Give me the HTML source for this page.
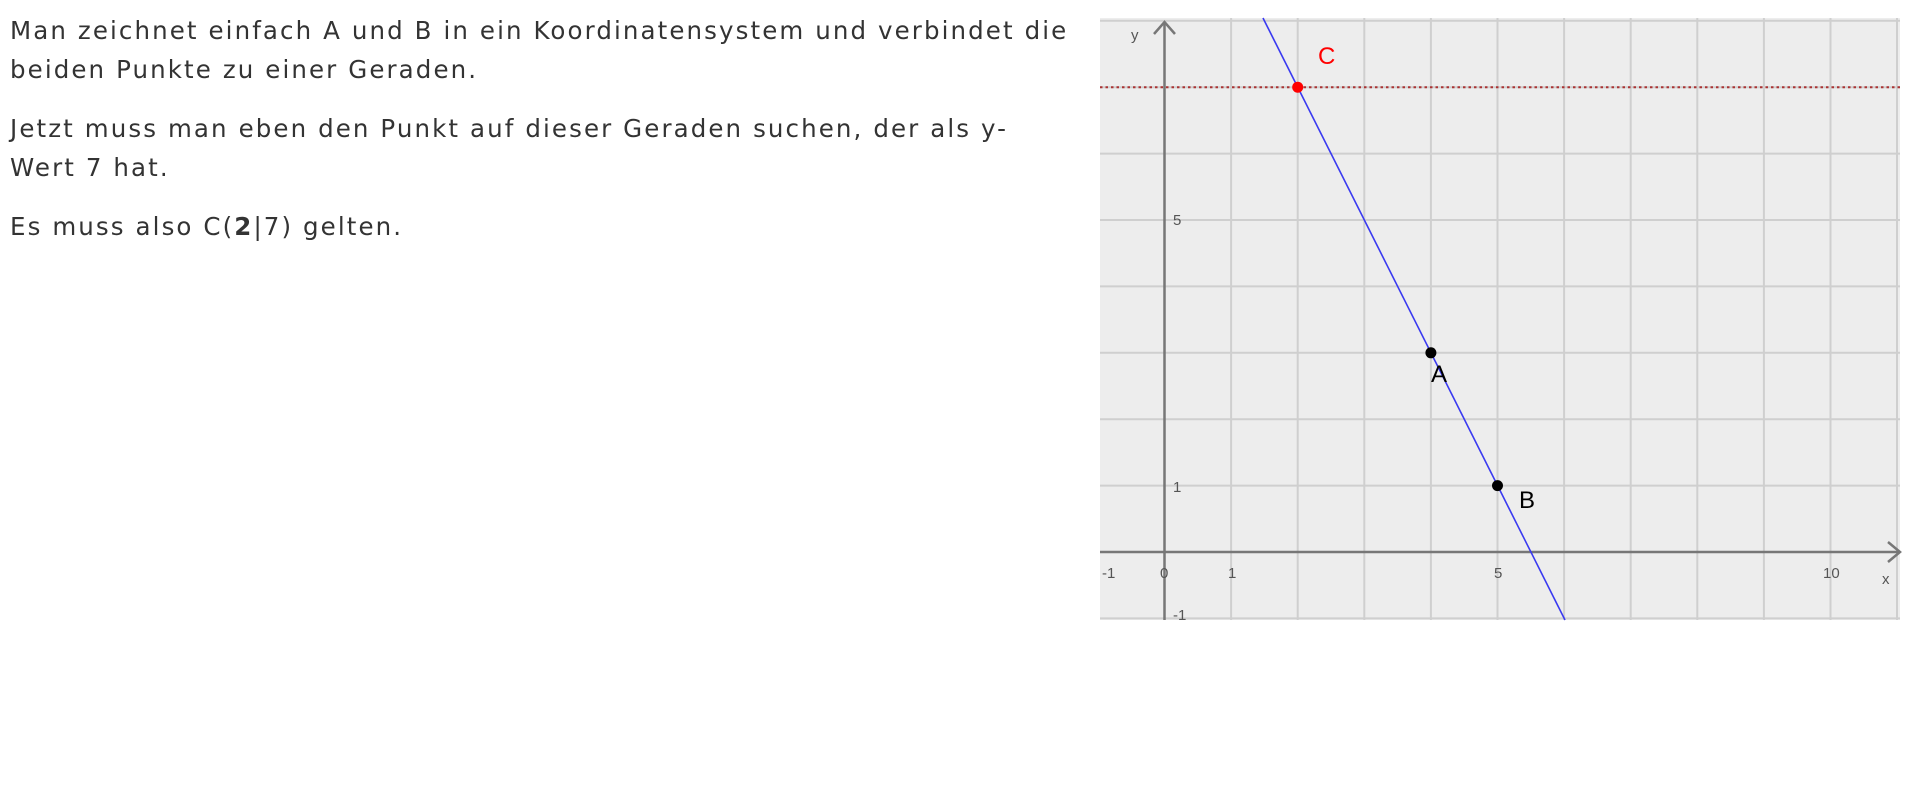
<!DOCTYPE html>
<html><head><meta charset="utf-8"><style>
body{margin:0;background:#fff;width:1920px;height:810px;overflow:hidden;position:relative}
.t{position:absolute;left:10px;top:11px;width:1100px;font-family:"DejaVu Sans","Liberation Sans",sans-serif;font-size:24.5px;letter-spacing:2.1px;color:#333;line-height:39px;white-space:nowrap}
.t p{margin:0 0 20px 0}
svg{position:absolute;left:0;top:0}
</style></head><body>
<div class="t">
<p>Man zeichnet einfach A und B in ein Koordinatensystem und verbindet die<br>beiden Punkte zu einer Geraden.</p>
<p>Jetzt muss man eben den Punkt auf dieser Geraden suchen, der als y-<br>Wert 7 hat.</p>
<p>Es muss also C(<b>2</b>|7) gelten.</p>
</div>
<svg width="1920" height="810" xmlns="http://www.w3.org/2000/svg">
<rect x="1100" y="18" width="800" height="602" fill="#ededed"/>
<g stroke="#cfcfcf" stroke-width="2">
<line x1="1231.1" y1="18" x2="1231.1" y2="620"/><line x1="1297.7" y1="18" x2="1297.7" y2="620"/>
<line x1="1364.3" y1="18" x2="1364.3" y2="620"/><line x1="1430.9" y1="18" x2="1430.9" y2="620"/>
<line x1="1497.5" y1="18" x2="1497.5" y2="620"/><line x1="1564.1" y1="18" x2="1564.1" y2="620"/>
<line x1="1630.7" y1="18" x2="1630.7" y2="620"/><line x1="1697.3" y1="18" x2="1697.3" y2="620"/>
<line x1="1763.9" y1="18" x2="1763.9" y2="620"/><line x1="1830.5" y1="18" x2="1830.5" y2="620"/>
<line x1="1897" y1="18" x2="1897" y2="620"/>
<line x1="1100" y1="618.4" x2="1900" y2="618.4"/><line x1="1100" y1="485.6" x2="1900" y2="485.6"/>
<line x1="1100" y1="419.2" x2="1900" y2="419.2"/><line x1="1100" y1="352.8" x2="1900" y2="352.8"/>
<line x1="1100" y1="286.4" x2="1900" y2="286.4"/><line x1="1100" y1="220" x2="1900" y2="220"/>
<line x1="1100" y1="153.6" x2="1900" y2="153.6"/><line x1="1100" y1="87.2" x2="1900" y2="87.2"/>
<line x1="1100" y1="20.8" x2="1900" y2="20.8"/>
</g>
<g stroke="#777" stroke-width="2.5" fill="none">
<line x1="1100" y1="552" x2="1900" y2="552"/>
<line x1="1164.5" y1="22" x2="1164.5" y2="620"/>
<polyline points="1888,542 1900,552 1888,562"/>
<polyline points="1154,34 1164.5,22 1175,34"/>
</g>
<line x1="1100" y1="87.2" x2="1900" y2="87.2" stroke="#a33" stroke-width="2" stroke-dasharray="2.5,3"/>
<line x1="1263" y1="18" x2="1565" y2="620" stroke="#3a3af0" stroke-width="1.6"/>
<circle cx="1297.7" cy="87.2" r="5.5" fill="#f00"/>
<circle cx="1430.9" cy="352.8" r="5.5" fill="#000"/>
<circle cx="1497.5" cy="485.6" r="5.5" fill="#000"/>
<g font-family="Liberation Sans,sans-serif">
<text x="1318" y="64" font-size="24" fill="#f00">C</text>
<text x="1431" y="382" font-size="24" fill="#000">A</text>
<text x="1519" y="508" font-size="24" fill="#000">B</text>
<g font-size="15" fill="#555">
<text x="1131" y="40">y</text>
<text x="1882" y="584">x</text>
<text x="1102" y="578">-1</text>
<text x="1160" y="578">0</text>
<text x="1228" y="578">1</text>
<text x="1494" y="578">5</text>
<text x="1823" y="578">10</text>
<text x="1173" y="225">5</text>
<text x="1173" y="492">1</text>
<text x="1173" y="620">-1</text>
</g></g>
</svg>
</body></html>
